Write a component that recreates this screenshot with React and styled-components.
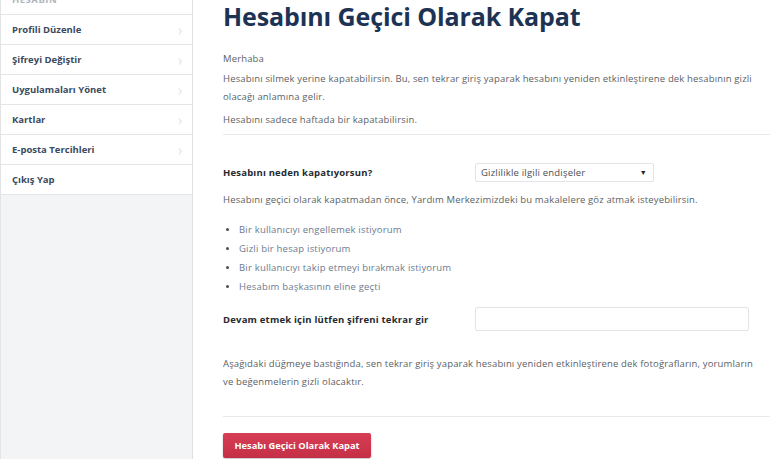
import React from "react";
import styled, { createGlobalStyle } from "styled-components";

const Global = createGlobalStyle`
  html, body {
    margin: 0;
    padding: 0;
    background: #ffffff;
    font-family: "Open Sans", "Liberation Sans", sans-serif;
    overflow: hidden;
  }
`;

const Page = styled.div`
  display: flex;
  width: 770px;
  height: 474px;
  margin-top: -15px;
`;

const Sidebar = styled.aside`
  width: 193px;
  flex: none;
  background: #f3f4f6;
  border-left: 1px solid #e3e4e6;
  border-right: 1px solid #dfe0e2;
  box-sizing: border-box;
`;

const Menu = styled.ul`
  list-style: none;
  margin: 0;
  padding: 0;
  background: #fff;
`;

const MenuItem = styled.li`
  display: flex;
  align-items: center;
  justify-content: space-between;
  height: 29px;
  padding: 0 10px 0 11px;
  border-bottom: 1px solid #e4e5e7;
  font-size: 9.5px;
  font-weight: 700;
  color: ${(p) => (p.header ? "#b0b5bd" : "#3b4a5e")};
  text-transform: ${(p) => (p.header ? "uppercase" : "none")};
  letter-spacing: ${(p) => (p.header ? "0.5px" : "0")};
`;

const Chevron = styled.span`
  color: #d6d9dd;
  font-size: 16px;
  font-weight: 300;
  line-height: 1;
`;

const Main = styled.main`
  flex: 1;
  padding: 15px 0 0 30px;
  background: #fff;
`;

const Title = styled.h1`
  margin: 0 0 18px 0;
  font-size: 25px;
  line-height: 32px;
  font-weight: 700;
  color: #1d3354;
  letter-spacing: -0.1px;
`;

const Text = styled.p`
  margin: 0 0 ${(p) => p.gap || 6}px 0;
  font-size: 9.5px;
  line-height: 18px;
  letter-spacing: 0.15px;
  color: #5b5f66;
  padding-right: 8px;
`;

const Divider = styled.hr`
  border: none;
  border-top: 1px solid #e9eaec;
  margin: ${(p) => p.m || "0"};
`;

const FieldRow = styled.div`
  display: grid;
  grid-template-columns: 252px auto;
  align-items: center;
  margin: ${(p) => p.m || "0"};
`;

const Label = styled.label`
  font-size: 9.5px;
  font-weight: 700;
  letter-spacing: 0.2px;
  color: #262a30;
`;

const Select = styled.div`
  width: 179px;
  height: 19px;
  box-sizing: border-box;
  border: 1px solid #e3e4e6;
  border-radius: 2px;
  display: flex;
  align-items: center;
  justify-content: space-between;
  padding: 0 6px 0 5px;
  font-size: 9.5px;
  letter-spacing: 0.2px;
  color: #4a4e55;
`;

const Caret = styled.span`
  font-size: 7px;
  color: #222;
`;

const Input = styled.div`
  width: 274px;
  height: 24px;
  box-sizing: border-box;
  border: 1px solid #e3e4e6;
  border-radius: 2px;
  background: #fff;
`;

const Links = styled.ul`
  margin: 0;
  padding: 0 0 0 16px;
  list-style: disc;
`;

const LinkItem = styled.li`
  font-size: 9.5px;
  line-height: 19px;
  letter-spacing: 0.2px;
  color: #6b7a92;
  &::marker {
    color: #4a4e55;
    font-size: 8px;
  }
`;

const Button = styled.button`
  height: 25px;
  padding: 0 11.5px;
  border: none;
  border-radius: 2px;
  background: linear-gradient(#d63e55, #c52f46);
  box-shadow: 0 1px 2px rgba(0, 0, 0, 0.25);
  color: #fff;
  font-family: inherit;
  font-size: 9.3px;
  font-weight: 700;
`;

const menu = [
  "Profili Düzenle",
  "Şifreyi Değiştir",
  "Uygulamaları Yönet",
  "Kartlar",
  "E-posta Tercihleri",
];

const links = [
  "Bir kullanıcıyı engellemek istiyorum",
  "Gizli bir hesap istiyorum",
  "Bir kullanıcıyı takip etmeyi bırakmak istiyorum",
  "Hesabım başkasının eline geçti",
];

export default function App() {
  return (
    <>
      <Global />
      <Page>
        <Sidebar>
          <Menu>
            <MenuItem header>Hesabın</MenuItem>
            {menu.map((m) => (
              <MenuItem key={m}>
                {m}
                <Chevron>›</Chevron>
              </MenuItem>
            ))}
            <MenuItem>Çıkış Yap</MenuItem>
          </Menu>
        </Sidebar>
        <Main>
          <Title>Hesabını Geçici Olarak Kapat</Title>
          <Text gap={2}>Merhaba</Text>
          <Text gap={5}>
            Hesabını silmek yerine kapatabilirsin. Bu, sen tekrar giriş yaparak hesabını yeniden
            etkinleştirene dek hesabının gizli olacağı anlamına gelir.
          </Text>
          <Text gap={5}>Hesabını sadece haftada bir kapatabilirsin.</Text>
          <Divider m="0 0 28px 0" />
          <FieldRow m="0 0 9px 0">
            <Label>Hesabını neden kapatıyorsun?</Label>
            <Select>
              Gizlilikle ilgili endişeler
              <Caret>▼</Caret>
            </Select>
          </FieldRow>
          <Text gap={11}>
            Hesabını geçici olarak kapatmadan önce, Yardım Merkezimizdeki bu makalelere göz atmak
            isteyebilirsin.
          </Text>
          <Links>
            {links.map((l) => (
              <LinkItem key={l}>{l}</LinkItem>
            ))}
          </Links>
          <FieldRow m="11px 0 24px 0">
            <Label>Devam etmek için lütfen şifreni tekrar gir</Label>
            <Input />
          </FieldRow>
          <Text gap={25}>
            Aşağıdaki düğmeye bastığında, sen tekrar giriş yaparak hesabını yeniden etkinleştirene
            dek fotoğrafların, yorumların ve beğenmelerin gizli olacaktır.
          </Text>
          <Divider m="0 0 15px 0" />
          <Button>Hesabı Geçici Olarak Kapat</Button>
        </Main>
      </Page>
    </>
  );
}
